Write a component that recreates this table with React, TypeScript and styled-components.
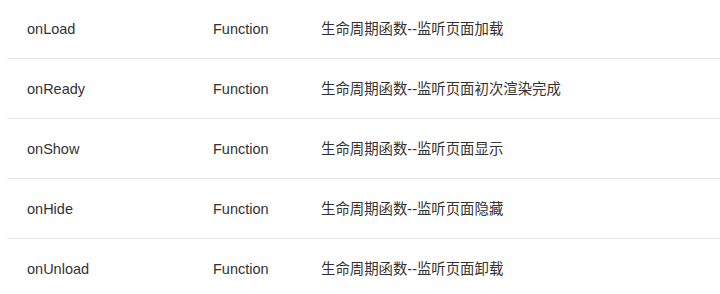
import React from 'react';
import styled, { createGlobalStyle } from 'styled-components';

const GlobalStyle = createGlobalStyle`
  html, body {
    margin: 0;
    padding: 0;
    background: #ffffff;
  }
  body {
    font-family: "Liberation Sans", Arial, "Noto Sans CJK SC", sans-serif;
    color: #333333;
  }
`;

const Table = styled.div`
  width: 720px;
  margin-top: -1px;
  padding-left: 7px;
  box-sizing: border-box;
`;

const Row = styled.div<{ $last?: boolean }>`
  display: grid;
  grid-template-columns: 186px 108px 1fr;
  align-items: center;
  height: 60px;
  box-sizing: border-box;
  padding-left: 20px;
  border-bottom: 1px solid ${({ $last }) => ($last ? 'transparent' : '#e6e6e6')};
`;

const Cell = styled.div<{ $cjk?: boolean }>`
  font-size: ${({ $cjk }) => ($cjk ? '14.4px' : '14.5px')};
  line-height: 20px;
  font-family: ${({ $cjk }) =>
    $cjk
      ? '"Liberation Sans", "Noto Sans CJK SC", sans-serif'
      : '"Liberation Sans", Arial, sans-serif'};
  white-space: nowrap;
`;

interface LifeCycle {
    name: string;
    type: string;
    desc: string;
}

const rows: LifeCycle[] = [
    { name: 'onLoad', type: 'Function', desc: '生命周期函数--监听页面加载' },
    { name: 'onReady', type: 'Function', desc: '生命周期函数--监听页面初次渲染完成' },
    { name: 'onShow', type: 'Function', desc: '生命周期函数--监听页面显示' },
    { name: 'onHide', type: 'Function', desc: '生命周期函数--监听页面隐藏' },
    { name: 'onUnload', type: 'Function', desc: '生命周期函数--监听页面卸载' },
];

const App: React.FC = () => {
    return (
        <>
            <GlobalStyle />
            <Table>
                {rows.map((row, index) => (
                    <Row key={row.name} $last={index === rows.length - 1}>
                        <Cell>{row.name}</Cell>
                        <Cell>{row.type}</Cell>
                        <Cell $cjk>{row.desc}</Cell>
                    </Row>
                ))}
            </Table>
        </>
    );
};

export default App;
